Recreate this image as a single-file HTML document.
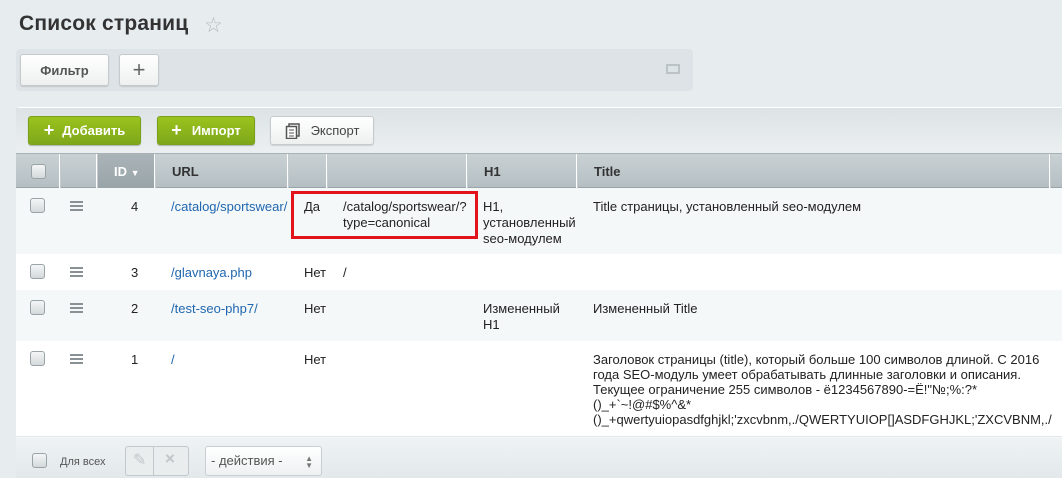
<!DOCTYPE html>
<html><head><meta charset="utf-8"><style>
*{box-sizing:border-box;margin:0;padding:0}
body{width:1062px;height:478px;overflow:hidden;background:#e7edef;font-family:"Liberation Sans",Arial,sans-serif;font-size:13px;color:#222;position:relative}
.abs{position:absolute}
h1{position:absolute;left:19px;top:12px;font-size:21px;font-weight:bold;color:#333;letter-spacing:0.2px}
.btn{position:absolute;border-radius:3px;font-weight:bold;display:flex;align-items:center;justify-content:center}
.wb{background:linear-gradient(#fff,#eef0f0);border:1px solid #c5cbcd;color:#555;box-shadow:0 1px 1px rgba(0,0,0,.12)}
.gb{background:linear-gradient(#9bc31e,#7ea71a);color:#fff;box-shadow:0 1px 1px rgba(0,0,0,.25);border:1px solid #7aa11a}
.cb{position:absolute;width:15px;height:15px;border:1px solid #9aa3a6;border-radius:3px;background:linear-gradient(#f4f6f6,#d3d9db)}
.row{position:absolute;left:16px;width:1046px}
.c{position:absolute;line-height:16px}
.a{color:#2067b0}
.hm{position:absolute;width:13px;height:2px;background:#8a9194;box-shadow:0 4px 0 #8a9194,0 8px 0 #8a9194}
.th{position:absolute;top:0;height:35px;border-right:1px solid #fff;border-left:1px solid #c3cbce;font-weight:bold;line-height:35px;padding-left:16px;color:#333}
</style></head><body>
<h1>Список страниц</h1>
<div class="abs" style="left:204px;top:13px;font-size:21px;color:#b3b9bc">☆</div>
<div class="abs" style="left:16px;top:49px;width:677px;height:42px;background:#dde3e6;border-radius:4px"></div>
<div class="btn wb" style="left:20px;top:54px;width:89px;height:32px;font-size:13px">Фильтр</div>
<div class="btn wb" style="left:119px;top:54px;width:40px;height:32px;font-size:22px;font-weight:normal;color:#666">+</div>
<div class="abs" style="left:666px;top:64px;width:14px;height:10px;border:2px solid #bcc3c6"></div>

<div class="abs" style="left:16px;top:107px;width:1046px;height:371px;background:#f4f7f8;border-top:1px solid #fff;border-radius:4px 0 0 0"></div>
<div class="abs" style="left:16px;top:108px;width:1046px;height:45px;background:linear-gradient(#dde3e5,#ebeff0)"></div>
<div class="btn gb" style="left:28px;top:116px;width:113px;height:29px;font-size:13px"><span style="font-size:18px;margin-right:8px">+</span>Добавить</div>
<div class="btn gb" style="left:157px;top:116px;width:98px;height:29px;font-size:13px"><span style="font-size:18px;margin-right:10px">+</span>Импорт</div>
<div class="btn wb" style="left:270px;top:116px;width:104px;height:29px;font-size:13px;font-weight:normal;color:#444"><svg width="16" height="16" style="margin-right:10px" viewBox="0 0 16 16"><rect x="4" y="1" width="10" height="12" fill="none" stroke="#555" stroke-width="1.5"/><rect x="1.5" y="3.5" width="10" height="12" fill="#fff" stroke="#555" stroke-width="1.5"/><path d="M4 7h5M4 10h5M4 13h5" stroke="#555"/></svg>Экспорт</div>

<div class="row" style="top:153px;height:35px;background:linear-gradient(#c9d1d4,#b5bfc3);border-top:1px solid #a8b2b6;border-bottom:1px solid #9aa4a8">
<div class="th" style="left:0;width:44px;border-left:none"></div>
<div class="cb" style="left:15px;top:10px"></div>
<div class="th" style="left:44px;width:37px"></div>
<div class="th" style="left:81px;width:58px;background:linear-gradient(#aab4b8,#98a3a8);color:#fff;padding-left:16px">ID <span style="font-size:9px">▼</span></div>
<div class="th" style="left:139px;width:133px">URL</div>
<div class="th" style="left:272px;width:39px"></div>
<div class="th" style="left:311px;width:140px"></div>
<div class="th" style="left:451px;width:110px">H1</div>
<div class="th" style="left:561px;width:473px">Title</div>
<div class="th" style="left:1034px;width:12px"></div>
</div>

<div class="row" style="top:188px;height:66px;background:#f5f8f9"></div>
<div class="row" style="top:254px;height:36px;background:#fff"></div>
<div class="row" style="top:290px;height:51px;background:#f5f8f9"></div>
<div class="row" style="top:341px;height:96px;background:#fff;border-bottom:1px solid #e3e8ea"></div>

<div class="cb" style="left:30px;top:198px"></div><div class="hm" style="left:70px;top:201px"></div>
<div class="c" style="left:131px;top:199px">4</div>
<div class="c a" style="left:171px;top:199px">/catalog/sportswear/</div>
<div class="c" style="left:304px;top:199px">Да</div>
<div class="c" style="left:343px;top:199px;width:130px">/catalog/sportswear/?<br>type=canonical</div>
<div class="c" style="left:483px;top:199px;width:95px">H1,<br>установленный<br>seo-модулем</div>
<div class="c" style="left:593px;top:199px">Title страницы, установленный seo-модулем</div>
<div class="abs" style="left:291px;top:191px;width:187px;height:48px;border:3px solid #e3131b"></div>

<div class="cb" style="left:30px;top:264px"></div><div class="hm" style="left:70px;top:267px"></div>
<div class="c" style="left:131px;top:265px">3</div>
<div class="c a" style="left:171px;top:265px">/glavnaya.php</div>
<div class="c" style="left:304px;top:265px">Нет</div>
<div class="c" style="left:343px;top:265px">/</div>

<div class="cb" style="left:30px;top:300px"></div><div class="hm" style="left:70px;top:303px"></div>
<div class="c" style="left:131px;top:301px">2</div>
<div class="c a" style="left:171px;top:301px">/test-seo-php7/</div>
<div class="c" style="left:304px;top:301px">Нет</div>
<div class="c" style="left:483px;top:301px">Измененный<br>H1</div>
<div class="c" style="left:593px;top:301px">Измененный Title</div>

<div class="cb" style="left:30px;top:351px"></div><div class="hm" style="left:70px;top:354px"></div>
<div class="c" style="left:131px;top:352px">1</div>
<div class="c a" style="left:171px;top:352px">/</div>
<div class="c" style="left:304px;top:352px">Нет</div>
<div class="c" style="left:593px;top:352px;width:470px;white-space:nowrap;line-height:15px">Заголовок страницы (title), который больше 100 символов длиной. С 2016<br>года SEO-модуль умеет обрабатывать длинные заголовки и описания.<br>Текущее ограничение 255 символов - ё1234567890-=Ё!"№;%:?*<br>()_+`~!@#$%^&amp;*<br>()_+qwertyuiopasdfghjkl;'zxcvbnm,./QWERTYUIOP[]ASDFGHJKL;'ZXCVBNM,./</div>

<div class="abs" style="left:16px;top:438px;width:1046px;height:40px;background:linear-gradient(#eef2f3,#e3e9eb)"></div>
<div class="cb" style="left:32px;top:453px"></div>
<div class="c" style="left:60px;top:454px;font-size:11px;color:#555">Для всех</div>
<div class="abs" style="left:125px;top:446px;width:64px;height:30px;border:1px solid #c3c9cb;border-radius:3px;background:#e9edee"></div>
<div class="abs" style="left:153px;top:446px;width:1px;height:30px;background:#c3c9cb"></div>
<div class="abs" style="left:133px;top:450px;color:#c0c5c7;font-size:16px">✎</div>
<div class="abs" style="left:165px;top:449px;color:#c0c5c7;font-size:17px;font-weight:bold">×</div>
<div class="abs" style="left:205px;top:446px;width:117px;height:30px;border:1px solid #c9cfd1;border-radius:3px;background:linear-gradient(#fff,#eef1f2);color:#555;font-size:13px;line-height:28px;padding-left:5px">- действия -<span style="position:absolute;right:8px;top:0;font-size:8px;line-height:7px;padding-top:8px;color:#777">▲<br>▼</span></div>
</body></html>
